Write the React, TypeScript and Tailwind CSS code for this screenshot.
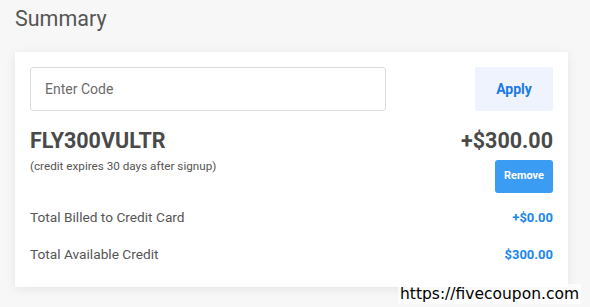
import React from 'react';

const App: React.FC = () => {
  return (
    <div className="relative w-[590px] h-[307px] overflow-hidden bg-[#f7f7f7] font-['Roboto',sans-serif]">
      <div className="px-[15px] pt-[6px]">
        <h1 className="text-[21.5px] leading-[26px] text-[#555555]">Summary</h1>

        <div className="mt-[20px] w-[553px] h-[235px] bg-white shadow-[0_2px_10px_rgba(0,0,0,0.08)] px-[15px] pt-[15px]">
          <div className="flex justify-between">
            <input
              placeholder="Enter Code"
              className="w-[356px] h-[44px] border border-[#dcdcdc] rounded-[3px] px-[14px] text-[14px] text-[#555] placeholder:text-[#6b6b6b] outline-none"
            />
            <button className="w-[78px] h-[44px] bg-[#eef3fd] rounded-[2px] text-[14px] font-bold text-[#1a7ae8]">
              Apply
            </button>
          </div>

          <div className="flex justify-between mt-[17px]">
            <div>
              <div className="text-[21.5px] leading-[26px] font-bold text-[#4a4a4a]">FLY300VULTR</div>
              <div className="mt-[5px] text-[11.7px] leading-[14px] text-[#555]">(credit expires 30 days after signup)</div>
            </div>
            <div className="flex flex-col items-end">
              <div className="text-[21.5px] leading-[26px] font-bold text-[#4a4a4a]">+$300.00</div>
              <button className="mt-[6px] w-[58px] h-[33px] bg-[#3a9cf3] rounded-[3px] text-[11px] font-bold text-white">
                Remove
              </button>
            </div>
          </div>

          <div className="mt-[16px] flex justify-between items-center text-[13.7px] leading-[17px]">
            <span className="text-[#555]">Total Billed to Credit Card</span>
            <span className="font-bold text-[#1c86ec] text-[13px]">+$0.00</span>
          </div>
          <div className="mt-[20px] flex justify-between items-center text-[13.7px] leading-[17px]">
            <span className="text-[#555]">Total Available Credit</span>
            <span className="font-bold text-[#1c86ec] text-[13px]">$300.00</span>
          </div>
        </div>
      </div>

      <div className="absolute left-[398px] top-[284px] px-[2px] bg-white/70 text-[15.5px] leading-[20px] text-black font-['DejaVu_Sans',sans-serif]">
        https://fivecoupon.com
      </div>
    </div>
  );
};

export default App;
